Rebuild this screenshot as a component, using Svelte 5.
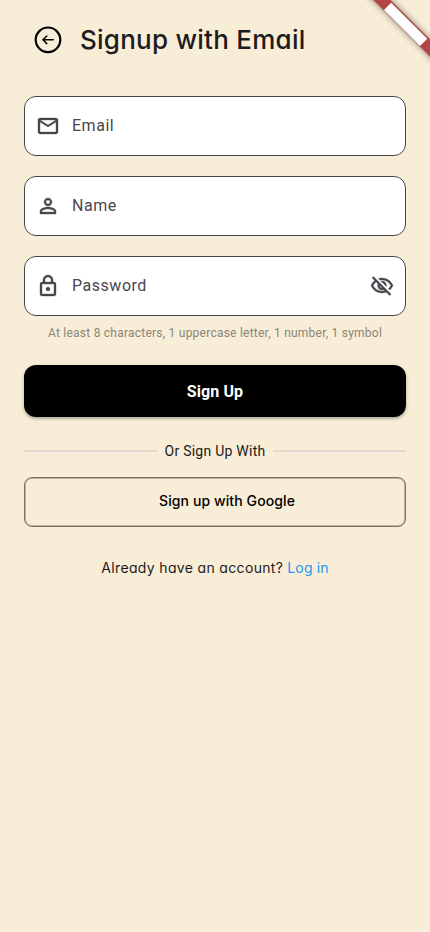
<script>
  const fields = [
    {
      label: 'Email',
      icon: 'M22 6c0-1.1-.9-2-2-2H4c-1.1 0-2 .9-2 2v12c0 1.100.9 2 2 2h16c1.100 0 2-.9 2-2V6zm-2 0l-8 5-8-5h16zm0 12H4V8l8 5 8-5v10z'
    },
    {
      label: 'Name',
      icon: 'M12 5.900a2.100 2.100 0 1 1 0 4.200 2.100 2.100 0 0 1 0-4.200m0 9c2.970 0 6.100 1.460 6.100 2.100v1.100H5.900V17c0-.64 3.130-2.100 6.100-2.100M12 4C9.790 4 8 5.790 8 8s1.790 4 4 4 4-1.790 4-4-1.790-4-4-4zm0 9c-2.670 0-8 1.340-8 4v3h16v-3c0-2.660-5.330-4-8-4z'
    },
    {
      label: 'Password',
      hidden: true,
      icon: 'M18 8h-1V6c0-2.760-2.240-5-5-5S7 3.240 7 6v2H6c-1.100 0-2 .9-2 2v10c0 1.100.9 2 2 2h12c1.100 0 2-.9 2-2V10c0-1.100-.9-2-2-2zM9 6c0-1.660 1.340-3 3-3s3 1.340 3 3v2H9V6zm9 14H6V10h12v10zm-6-3c1.100 0 2-.9 2-2s-.9-2-2-2-2 .9-2 2 .9 2 2 2z'
    }
  ];
  const eyeOff = 'M12 6c3.790 0 7.170 2.130 8.820 5.500-.59 1.220-1.420 2.270-2.410 3.120l1.410 1.410c1.390-1.230 2.490-2.770 3.180-4.530C21.270 7.110 17 4 12 4c-1.270 0-2.490.2-3.640.57l1.650 1.650C10.660 6.090 11.320 6 12 6zm-1.070 1.140L13 9.210c.57.25 1.030.71 1.280 1.280l2.070 2.070c.08-.34.14-.7.14-1.070C16.500 9.010 14.480 7 12 7c-.37 0-.72.05-1.070.14zM2.010 3.870l2.680 2.680C3.060 7.830 1.770 9.530 1 11.500 2.730 15.890 7 19 12 19c1.520 0 2.980-.29 4.320-.82l3.420 3.420 1.410-1.410L3.420 2.450 2.010 3.870zm7.500 7.500l2.610 2.610c-.04.01-.08.02-.12.02-1.380 0-2.500-1.120-2.500-2.500 0-.05.01-.08.01-.13zm-3.400-3.400l1.750 1.750c-.23.55-.36 1.150-.36 1.780 0 2.480 2.020 4.500 4.500 4.500.63 0 1.230-.13 1.770-.36l.98.98c-.88.24-1.800.38-2.750.38-3.790 0-7.170-2.130-8.820-5.500.7-1.430 1.720-2.610 2.930-3.530z';
</script>

<main>
  <header>
    <button class="back" aria-label="Back">
      <svg width="32" height="32" viewBox="0 0 32 32" fill="none" stroke="#000" stroke-linecap="round" stroke-linejoin="round">
        <circle cx="16" cy="15.800" r="12.300" stroke-width="2.200" />
        <path d="M21.200 15.800H10.800M14.800 12L10.900 15.800l3.900 3.800" stroke-width="1.500" />
      </svg>
    </button>
    <h1>Signup with Email</h1>
  </header>

  <form>
    {#each fields as field}
      <div class="field">
        <svg width="24" height="24" viewBox="0 0 24 24"><path d={field.icon} /></svg>
        <span>{field.label}</span>
        {#if field.hidden}
          <svg class="eye" width="24" height="24" viewBox="0 0 24 24"><path d={eyeOff} /></svg>
        {/if}
      </div>
    {/each}
    <p class="hint"><span>At least 8 characters, 1 uppercase letter, 1 number, 1 symbol</span></p>
    <button class="primary" type="button"><span>Sign Up</span></button>
    <div class="divider"><i></i><span>Or Sign Up With</span><i></i></div>
    <button class="google" type="button"><span>Sign up with Google</span></button>
    <p class="login"><span class="ask">Already have an account?</span><a href="#login">Log in</a></p>
  </form>

  <svg class="banner" width="80" height="80" viewBox="-80 0 80 80">
    <g transform="rotate(45)">
      <rect class="ribbon-shadow" x="-50" y="28" width="100" height="12" />
      <rect class="ribbon" x="-50" y="28" width="100" height="12" />
      <path d="M-25.500 29.400h51v10.200h-51z" fill="#fff" />
      <path d="M-15.300 29.400v10.200M-5.100 29.400v10.200M5.100 29.400v10.200M15.300 29.400v10.200" stroke="#f3e4e2" stroke-width=".3" />
    </g>
  </svg>
</main>

<style>
  :global(body) { background: #f8edd7; }
  main {
    position: relative;
    box-sizing: border-box;
    width: 430px;
    height: 932px;
    padding: 0 24px;
    overflow: hidden;
    background: #f8edd7;
    font-family: Roboto, sans-serif;
    color: #1d1b20;
  }
  button { font: inherit; cursor: pointer; }
  header { display: flex; align-items: center; height: 80px; padding-left: 8px; }
  .back { display: flex; padding: 0; border: 0; background: none; }
  h1, .google, .login {
    font-family: Inter, sans-serif;
    font-feature-settings: 'cv11' 1;
  }
  h1 { margin: 0 0 0 16px; font-size: 26px; line-height: 32px; font-weight: 450; letter-spacing: .25px; white-space: nowrap; }
  form { display: flex; flex-direction: column; padding-top: 16px; }
  .field {
    display: flex;
    align-items: center;
    box-sizing: border-box;
    height: 60px;
    margin-bottom: 20px;
    padding: 0 11px;
    border: 1px solid #49454f;
    border-radius: 12px;
    background: #fff;
    color: #49454f;
    font-size: 16px;
    letter-spacing: .53px;
  }
  .field svg { fill: #49454f; stroke: #49454f; stroke-width: .35px; }
  .field span { margin-left: 12px; line-height: 24px; }
  .field .eye { margin-left: auto; }
  .hint { margin: -11px 0 0; padding-left: 24px; font-size: 12px; line-height: 16px; letter-spacing: .235px; color: #8b8578; white-space: nowrap; }
  .primary {
    height: 52px;
    margin-top: 24px;
    border: 0;
    border-radius: 12px;
    background: #000;
    color: #fff;
    font-size: 16px;
    font-weight: 700;
    letter-spacing: .1px;
    box-shadow: 0 2px 3px rgba(0, 0, 0, .22), 0 1px 4px rgba(0, 0, 0, .1);
  }
  .divider { display: flex; align-items: center; gap: 8px; height: 20px; margin-top: 24px; font-size: 14px; letter-spacing: .25px; white-space: nowrap; }
  .divider i { flex: 1; height: 2px; background: #e2d9d3; }
  .google {
    height: 50px;
    margin-top: 16px;
    padding: 0 0 3px 24px;
    border: 1px solid #79715f;
    border-radius: 8px;
    background: none;
    box-shadow: inset 0 0 0 1px rgba(121, 113, 95, .45);
    color: #000;
    font-size: 14px;
    font-weight: 450;
    letter-spacing: .1px;
  }
  .login { display: flex; justify-content: center; gap: 4px; margin: 31px 0 0; font-size: 14px; line-height: 20px; font-weight: 430; white-space: nowrap; }
  .ask { letter-spacing: .34px; }
  .login a { color: #2196f3; text-decoration: none; letter-spacing: .15px; }
  .banner { position: absolute; top: 0; right: 0; }
  .ribbon { fill: #b04744; }
  .ribbon-shadow { fill: rgba(0, 0, 0, .5); filter: blur(3px); }
</style>
